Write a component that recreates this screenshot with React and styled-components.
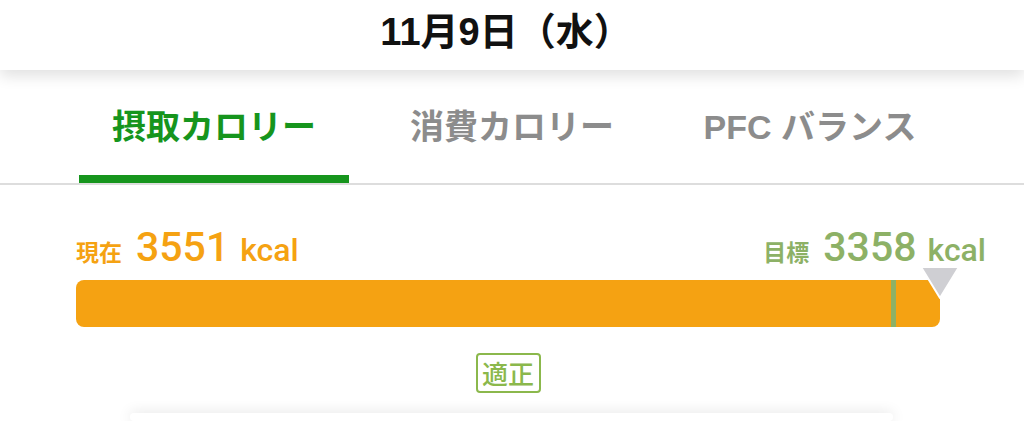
import React from 'react';
import styled, { createGlobalStyle } from 'styled-components';

const GlobalStyle = createGlobalStyle`
  html, body {
    margin: 0;
    padding: 0;
    background: #ffffff;
  }
  body {
    font-family: "Liberation Sans", "Noto Sans CJK JP", sans-serif;
    -webkit-font-smoothing: antialiased;
  }
`;

const colors = {
  active: '#16951d',
  inactive: '#8c8c8c',
  orange: '#f5a212',
  target: '#8db166',
  badge: '#8bb84c',
  marker: '#cfcfd3',
  rule: '#dddddd',
};

const data = {
  date: '11月9日（水）',
  current: 3551,
  target: 3358,
  status: '適正',
};

const tabs = ['摂取カロリー', '消費カロリー', 'PFC バランス'];

const Page = styled.div`
  width: 1024px;
  height: 421px;
  overflow: hidden;
  background: #fff;
  display: flex;
  flex-direction: column;
`;

const Header = styled.header`
  height: 70px;
  flex-shrink: 0;
  display: flex;
  align-items: center;
  justify-content: center;
  background: #fff;
  box-shadow: 0 6px 14px rgba(0, 0, 0, 0.12);
  position: relative;
  z-index: 2;
`;

const Title = styled.h1`
  margin: 0 0 0 -12px;
  font-size: 38px;
  font-weight: 700;
  color: #111;
  line-height: 1;
  padding-bottom: 6px;
`;

const TabBar = styled.nav`
  display: flex;
  padding: 0 65px;
  border-bottom: 2px solid ${colors.rule};
`;

const Tab = styled.div`
  flex: 1;
  height: 113px;
  display: flex;
  flex-direction: column;
  align-items: center;
  font-size: 34px;
  font-weight: 700;
  line-height: 1;
  color: ${({ $active }) => ($active ? colors.active : colors.inactive)};
`;

const TabLabel = styled.span`
  margin-top: 40px;
  flex: 1;
`;

const TabLine = styled.div`
  align-self: stretch;
  margin: 0 14px;
  height: 8px;
  background: ${({ $active }) => ($active ? colors.active : 'transparent')};
`;

const Summary = styled.section`
  padding: 0 38px 0 76px;
  display: flex;
  flex-direction: column;
`;

const Figures = styled.div`
  display: flex;
  justify-content: space-between;
  align-items: baseline;
  margin-top: 42px;
  line-height: 1;
`;

const Figure = styled.div`
  display: flex;
  align-items: baseline;
  color: ${({ $tone }) => $tone};
`;

const FigureLabel = styled.span`
  font-size: 23px;
  font-weight: 700;
  margin-right: 14px;
`;

const FigureValue = styled.span`
  font-family: Roboto, "Liberation Sans", sans-serif;
  font-size: 41px;
  font-weight: 500;
  margin-right: 11px;
`;

const FigureUnit = styled.span`
  font-family: Roboto, "Liberation Sans", sans-serif;
  font-size: 32px;
  font-weight: 500;
`;

const Meter = styled.div`
  margin-right: 46px;
  display: flex;
  flex-direction: column;
  align-items: center;
`;

const Track = styled.div`
  position: relative;
  align-self: stretch;
  height: 47px;
  margin-top: 12px;
  border-radius: 8px;
  background: ${colors.orange};
`;

const TargetLine = styled.div`
  position: absolute;
  top: 0;
  bottom: 0;
  width: 5px;
  margin-left: -2px;
  background: ${colors.target};
`;

const Marker = styled.svg`
  position: absolute;
  right: -21px;
  top: -14px;
`;

const Badge = styled.div`
  margin-top: 26px;
  width: 61px;
  height: 36px;
  border: 2.5px solid ${colors.badge};
  border-radius: 4px;
  display: flex;
  align-items: center;
  justify-content: center;
  font-family: "Noto Sans CJK JP", sans-serif;
  font-size: 26px;
  font-weight: 500;
  line-height: 1;
  color: ${colors.badge};
`;

const Card = styled.div`
  margin: 20px 131px 0 130px;
  height: 60px;
  background: #fff;
  border-radius: 10px;
  box-shadow: 0 0 14px rgba(0, 0, 0, 0.13);
`;

export default function App() {
  const targetPct = (data.target / data.current) * 100;
  return (
    <Page>
      <GlobalStyle />
      <Header>
        <Title>{data.date}</Title>
      </Header>
      <TabBar>
        {tabs.map((t, i) => (
          <Tab key={t} $active={i === 0}>
            <TabLabel>{t}</TabLabel>
            <TabLine $active={i === 0} />
          </Tab>
        ))}
      </TabBar>
      <Summary>
        <Figures>
          <Figure $tone={colors.orange}>
            <FigureLabel>現在</FigureLabel>
            <FigureValue>{data.current}</FigureValue>
            <FigureUnit>kcal</FigureUnit>
          </Figure>
          <Figure $tone={colors.target}>
            <FigureLabel>目標</FigureLabel>
            <FigureValue>{data.target}</FigureValue>
            <FigureUnit>kcal</FigureUnit>
          </Figure>
        </Figures>
        <Meter>
          <Track>
            <TargetLine style={{ left: `${targetPct}%` }} />
            <Marker width="42" height="34" viewBox="0 0 42 34">
              <polygon points="2,1 40,1 21,32" fill={colors.marker} stroke="#fff" strokeWidth="2" strokeLinejoin="round" />
            </Marker>
          </Track>
          <Badge>{data.status}</Badge>
        </Meter>
      </Summary>
      <Card />
    </Page>
  );
}
